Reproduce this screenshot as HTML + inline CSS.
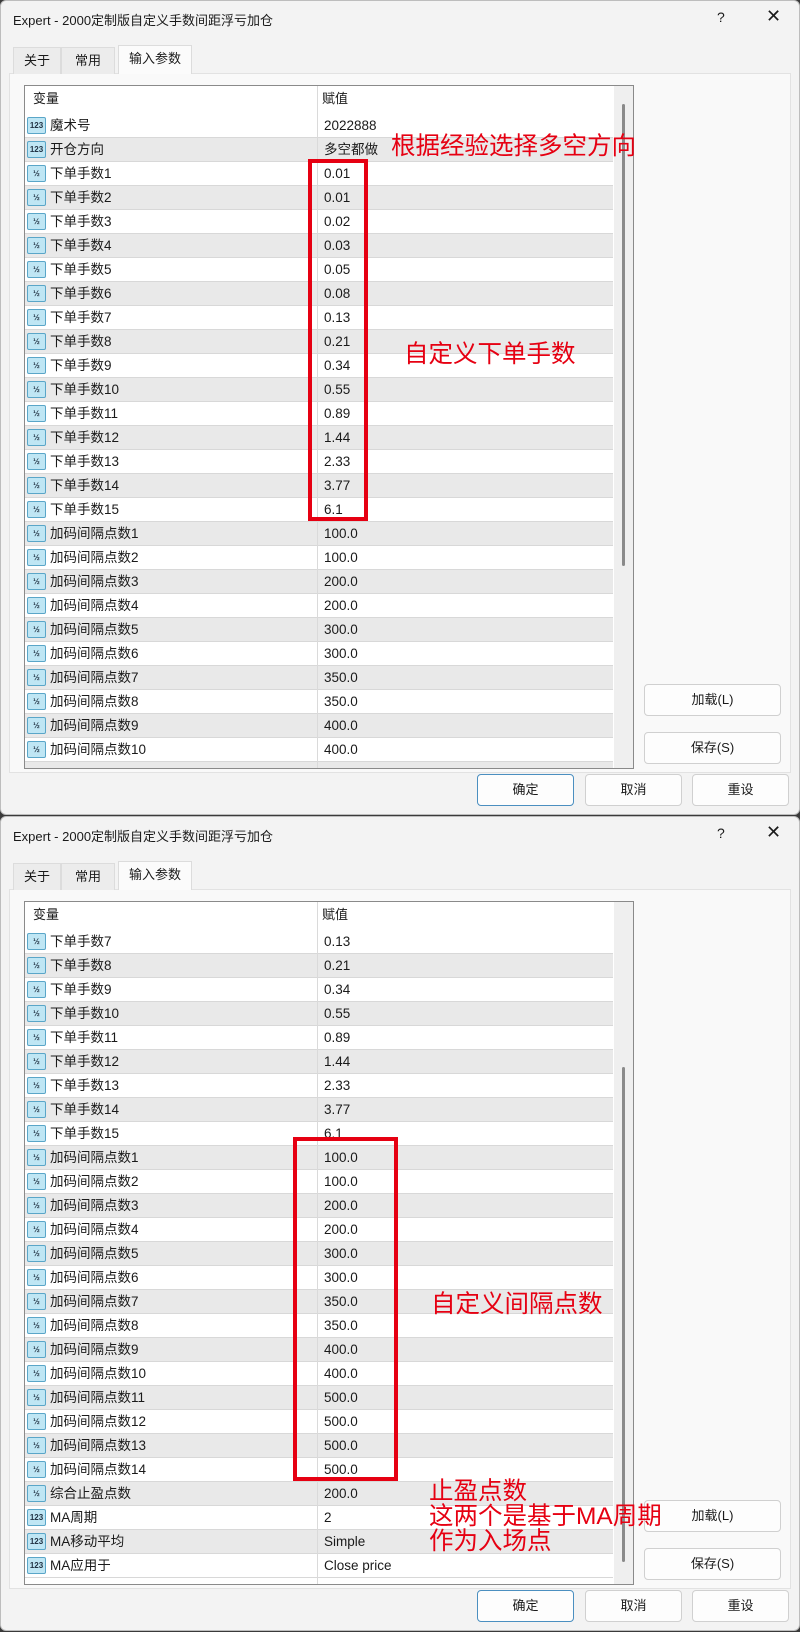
<!DOCTYPE html>
<html><head><meta charset="utf-8"><style>
*{box-sizing:border-box;margin:0;padding:0}
body{width:800px;height:1632px;background:#3a3a3a;font-family:"Liberation Sans","Noto Sans CJK SC",sans-serif;font-size:13px;color:#1a1a1a;position:relative;overflow:hidden}
.dlg{position:absolute;left:0;width:800px;height:815px;background:#f3f3f3;border:1px solid #bdbdbd;border-radius:6px;overflow:hidden}
.title{position:absolute;left:12px;top:9px;font-size:13px}
.q{position:absolute;left:716px;top:8px;font-size:14px}
.x{position:absolute;left:765px;top:5px;font-size:18px}
.tab{position:absolute;top:46px;height:27px;line-height:26px;text-align:center;border:1px solid #dcdcdc;border-bottom:none;background:#ececec}
.tab.sel{background:#fbfbfb;top:44px;height:29px}
.panel{position:absolute;left:8px;top:72px;width:782px;height:700px;background:#f9f9f9;border:1px solid #e2e2e2}
.list{position:absolute;left:23px;top:84px;width:610px;height:684px;background:#fff;border:1px solid #8a8a8a;overflow:hidden}
.hdr{position:absolute;left:0;top:0;width:590px;height:28px;line-height:26px}
.hdr span{position:absolute}
.vline{position:absolute;left:292px;top:0;width:1px;height:700px;background:#dadada}
.sb{position:absolute;left:589px;top:0;width:20px;height:684px;background:#efefef}
.thumb{position:absolute;left:8px;width:3px;background:#8a8a8a;border-radius:2px}
.r{position:absolute;left:0;width:588px;height:24px;line-height:23px;border-bottom:1px solid #d8d8d8;font-size:13.5px}
.r.g{background:#e9e9e9}
.ic{position:absolute;left:2px;top:3px;width:19px;height:17px;border:1px solid #5aa6c8;background:#bfe6f4;border-radius:2px;font-size:8px;line-height:15px;text-align:center;color:#234;font-weight:bold}
.nm{position:absolute;left:25px}
.vl{position:absolute;left:299px}
.btn{position:absolute;height:32px;line-height:30px;text-align:center;background:#fdfdfd;border:1px solid #d0d0d0;border-radius:4px}
.ok{border:1.5px solid #4b8fc0}
.red{position:absolute;border:4px solid #e60012}
.rt{position:absolute;color:#e60012;font-size:24.5px;line-height:25px;white-space:nowrap}
</style></head><body>

<div class="dlg" style="top:0">
<div class="title">Expert - 2000定制版自定义手数间距浮亏加仓</div>
<div class="q">?</div><div class="x">✕</div>
<div class="panel"></div>
<div class="tab" style="left:12px;width:48px">关于</div>
<div class="tab" style="left:60px;width:54px">常用</div>
<div class="tab sel" style="left:117px;width:74px">输入参数</div>
<div class="list">
<div class="hdr"><span style="left:8px">变量</span><span style="left:297px">赋值</span></div>
<div class="r" style="top:28px"><span class="ic">123</span><span class="nm">魔术号</span><span class="vl">2022888</span></div>
<div class="r g" style="top:52px"><span class="ic">123</span><span class="nm">开仓方向</span><span class="vl">多空都做</span></div>
<div class="r" style="top:76px"><span class="ic">½</span><span class="nm">下单手数1</span><span class="vl">0.01</span></div>
<div class="r g" style="top:100px"><span class="ic">½</span><span class="nm">下单手数2</span><span class="vl">0.01</span></div>
<div class="r" style="top:124px"><span class="ic">½</span><span class="nm">下单手数3</span><span class="vl">0.02</span></div>
<div class="r g" style="top:148px"><span class="ic">½</span><span class="nm">下单手数4</span><span class="vl">0.03</span></div>
<div class="r" style="top:172px"><span class="ic">½</span><span class="nm">下单手数5</span><span class="vl">0.05</span></div>
<div class="r g" style="top:196px"><span class="ic">½</span><span class="nm">下单手数6</span><span class="vl">0.08</span></div>
<div class="r" style="top:220px"><span class="ic">½</span><span class="nm">下单手数7</span><span class="vl">0.13</span></div>
<div class="r g" style="top:244px"><span class="ic">½</span><span class="nm">下单手数8</span><span class="vl">0.21</span></div>
<div class="r" style="top:268px"><span class="ic">½</span><span class="nm">下单手数9</span><span class="vl">0.34</span></div>
<div class="r g" style="top:292px"><span class="ic">½</span><span class="nm">下单手数10</span><span class="vl">0.55</span></div>
<div class="r" style="top:316px"><span class="ic">½</span><span class="nm">下单手数11</span><span class="vl">0.89</span></div>
<div class="r g" style="top:340px"><span class="ic">½</span><span class="nm">下单手数12</span><span class="vl">1.44</span></div>
<div class="r" style="top:364px"><span class="ic">½</span><span class="nm">下单手数13</span><span class="vl">2.33</span></div>
<div class="r g" style="top:388px"><span class="ic">½</span><span class="nm">下单手数14</span><span class="vl">3.77</span></div>
<div class="r" style="top:412px"><span class="ic">½</span><span class="nm">下单手数15</span><span class="vl">6.1</span></div>
<div class="r g" style="top:436px"><span class="ic">½</span><span class="nm">加码间隔点数1</span><span class="vl">100.0</span></div>
<div class="r" style="top:460px"><span class="ic">½</span><span class="nm">加码间隔点数2</span><span class="vl">100.0</span></div>
<div class="r g" style="top:484px"><span class="ic">½</span><span class="nm">加码间隔点数3</span><span class="vl">200.0</span></div>
<div class="r" style="top:508px"><span class="ic">½</span><span class="nm">加码间隔点数4</span><span class="vl">200.0</span></div>
<div class="r g" style="top:532px"><span class="ic">½</span><span class="nm">加码间隔点数5</span><span class="vl">300.0</span></div>
<div class="r" style="top:556px"><span class="ic">½</span><span class="nm">加码间隔点数6</span><span class="vl">300.0</span></div>
<div class="r g" style="top:580px"><span class="ic">½</span><span class="nm">加码间隔点数7</span><span class="vl">350.0</span></div>
<div class="r" style="top:604px"><span class="ic">½</span><span class="nm">加码间隔点数8</span><span class="vl">350.0</span></div>
<div class="r g" style="top:628px"><span class="ic">½</span><span class="nm">加码间隔点数9</span><span class="vl">400.0</span></div>
<div class="r" style="top:652px"><span class="ic">½</span><span class="nm">加码间隔点数10</span><span class="vl">400.0</span></div>
<div class="r g" style="top:676px"></div>
<div class="vline"></div>
<div class="sb"><div class="thumb" style="top:18px;height:462px"></div></div>
</div>
<div class="btn" style="left:643px;top:683px;width:137px">加载(L)</div>
<div class="btn" style="left:643px;top:731px;width:137px">保存(S)</div>
<div class="btn ok" style="left:476px;top:773px;width:97px">确定</div>
<div class="btn" style="left:584px;top:773px;width:97px">取消</div>
<div class="btn" style="left:691px;top:773px;width:97px">重设</div>
</div>

<div class="dlg" style="top:816px">
<div class="title">Expert - 2000定制版自定义手数间距浮亏加仓</div>
<div class="q">?</div><div class="x">✕</div>
<div class="panel"></div>
<div class="tab" style="left:12px;width:48px">关于</div>
<div class="tab" style="left:60px;width:54px">常用</div>
<div class="tab sel" style="left:117px;width:74px">输入参数</div>
<div class="list">
<div class="hdr"><span style="left:8px">变量</span><span style="left:297px">赋值</span></div>
<div class="r" style="top:28px"><span class="ic">½</span><span class="nm">下单手数7</span><span class="vl">0.13</span></div>
<div class="r g" style="top:52px"><span class="ic">½</span><span class="nm">下单手数8</span><span class="vl">0.21</span></div>
<div class="r" style="top:76px"><span class="ic">½</span><span class="nm">下单手数9</span><span class="vl">0.34</span></div>
<div class="r g" style="top:100px"><span class="ic">½</span><span class="nm">下单手数10</span><span class="vl">0.55</span></div>
<div class="r" style="top:124px"><span class="ic">½</span><span class="nm">下单手数11</span><span class="vl">0.89</span></div>
<div class="r g" style="top:148px"><span class="ic">½</span><span class="nm">下单手数12</span><span class="vl">1.44</span></div>
<div class="r" style="top:172px"><span class="ic">½</span><span class="nm">下单手数13</span><span class="vl">2.33</span></div>
<div class="r g" style="top:196px"><span class="ic">½</span><span class="nm">下单手数14</span><span class="vl">3.77</span></div>
<div class="r" style="top:220px"><span class="ic">½</span><span class="nm">下单手数15</span><span class="vl">6.1</span></div>
<div class="r g" style="top:244px"><span class="ic">½</span><span class="nm">加码间隔点数1</span><span class="vl">100.0</span></div>
<div class="r" style="top:268px"><span class="ic">½</span><span class="nm">加码间隔点数2</span><span class="vl">100.0</span></div>
<div class="r g" style="top:292px"><span class="ic">½</span><span class="nm">加码间隔点数3</span><span class="vl">200.0</span></div>
<div class="r" style="top:316px"><span class="ic">½</span><span class="nm">加码间隔点数4</span><span class="vl">200.0</span></div>
<div class="r g" style="top:340px"><span class="ic">½</span><span class="nm">加码间隔点数5</span><span class="vl">300.0</span></div>
<div class="r" style="top:364px"><span class="ic">½</span><span class="nm">加码间隔点数6</span><span class="vl">300.0</span></div>
<div class="r g" style="top:388px"><span class="ic">½</span><span class="nm">加码间隔点数7</span><span class="vl">350.0</span></div>
<div class="r" style="top:412px"><span class="ic">½</span><span class="nm">加码间隔点数8</span><span class="vl">350.0</span></div>
<div class="r g" style="top:436px"><span class="ic">½</span><span class="nm">加码间隔点数9</span><span class="vl">400.0</span></div>
<div class="r" style="top:460px"><span class="ic">½</span><span class="nm">加码间隔点数10</span><span class="vl">400.0</span></div>
<div class="r g" style="top:484px"><span class="ic">½</span><span class="nm">加码间隔点数11</span><span class="vl">500.0</span></div>
<div class="r" style="top:508px"><span class="ic">½</span><span class="nm">加码间隔点数12</span><span class="vl">500.0</span></div>
<div class="r g" style="top:532px"><span class="ic">½</span><span class="nm">加码间隔点数13</span><span class="vl">500.0</span></div>
<div class="r" style="top:556px"><span class="ic">½</span><span class="nm">加码间隔点数14</span><span class="vl">500.0</span></div>
<div class="r g" style="top:580px"><span class="ic">½</span><span class="nm">综合止盈点数</span><span class="vl">200.0</span></div>
<div class="r" style="top:604px"><span class="ic">123</span><span class="nm">MA周期</span><span class="vl">2</span></div>
<div class="r g" style="top:628px"><span class="ic">123</span><span class="nm">MA移动平均</span><span class="vl">Simple</span></div>
<div class="r" style="top:652px"><span class="ic">123</span><span class="nm">MA应用于</span><span class="vl">Close price</span></div>
<div class="vline"></div>
<div class="sb"><div class="thumb" style="top:165px;height:495px"></div></div>
</div>
<div class="btn" style="left:643px;top:683px;width:137px">加载(L)</div>
<div class="btn" style="left:643px;top:731px;width:137px">保存(S)</div>
<div class="btn ok" style="left:476px;top:773px;width:97px">确定</div>
<div class="btn" style="left:584px;top:773px;width:97px">取消</div>
<div class="btn" style="left:691px;top:773px;width:97px">重设</div>
</div>

<div class="red" style="left:308px;top:159px;width:60px;height:362px"></div>
<div class="rt" style="left:391px;top:134px">根据经验选择多空方向</div>
<div class="rt" style="left:404px;top:342px">自定义下单手数</div>
<div class="red" style="left:293px;top:1137px;width:105px;height:344px"></div>
<div class="rt" style="left:431px;top:1292px">自定义间隔点数</div>
<div class="rt" style="left:429px;top:1479px">止盈点数</div>
<div class="rt" style="left:429px;top:1504px">这两个是基于MA周期</div>
<div class="rt" style="left:429px;top:1529px">作为入场点</div>
</body></html>
